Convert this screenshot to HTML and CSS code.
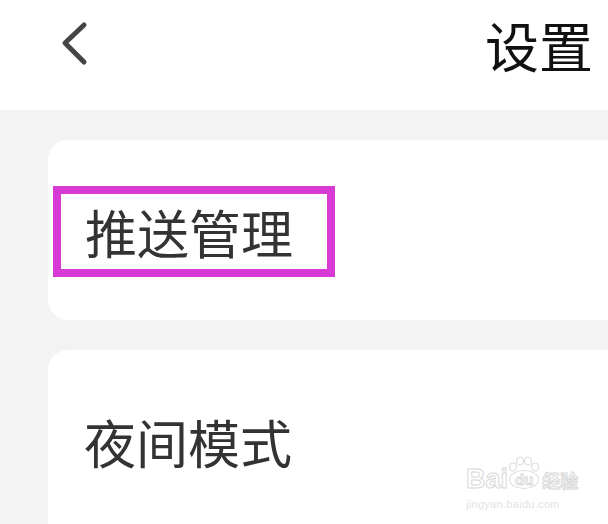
FILE: index.html
```html
<!DOCTYPE html>
<html lang="zh-CN">
<head>
  <meta charset="UTF-8" />
  <meta name="viewport" content="width=device-width, initial-scale=1.0"/>
  <title>设置</title>
  <link rel="stylesheet" href="styles.css">
</head>
<body>
  <div class="header">
    <svg class="back" width="40" height="50" viewBox="0 0 40 50">
      <polyline points="26,6 7,24 26,43" fill="none" stroke="#444" stroke-width="5" stroke-linecap="round" stroke-linejoin="round"/>
    </svg>
    <div class="title">设置</div>
  </div>

  <div class="card card-push">
    <div class="highlight">推送管理</div>
  </div>

  <div class="card card-night">
    <div class="item">夜间模式</div>
    <div class="watermark">
      <div class="wm-logo">
        <span>Bai</span>
        <span class="wm-du">
          <svg class="wm-paw" width="34" height="16" viewBox="0 0 34 16">
            <ellipse cx="6" cy="11" rx="3.5" ry="4" fill="none" stroke="#ddd" stroke-width="1.2"/>
            <ellipse cx="13" cy="5" rx="3.5" ry="4" fill="none" stroke="#ddd" stroke-width="1.2"/>
            <ellipse cx="21" cy="5" rx="3.5" ry="4" fill="none" stroke="#ddd" stroke-width="1.2"/>
            <ellipse cx="28" cy="11" rx="3.5" ry="4" fill="none" stroke="#ddd" stroke-width="1.2"/>
          </svg>
          du
        </span>
        <span class="wm-cn">经验</span>
      </div>
      <div class="wm-url">jingyan.baidu.com</div>
    </div>
  </div>
</body>
</html>
```

FILE: styles.css
```css
body {
  margin: 0;
  background-color: #f3f3f3;
  font-family: "Noto Sans CJK SC", "Noto Sans", sans-serif;
  overflow: hidden;
  height: 524px;
}

.header {
  height: 110px;
  background: #fff;
  display: flex;
  align-items: center;
  justify-content: space-between;
  padding: 0 15px 0 58px;
  box-sizing: border-box;
}

.back {
  margin-top: -22px;
}

.title {
  font-size: 54px;
  line-height: 1;
  color: #111;
  margin-top: -20px;
}

/* cards run off the right edge, so only the left corners are rounded */
.card {
  background: #fff;
  border-radius: 20px 0 0 20px;
  margin: 30px 0 0 48px;
  box-sizing: border-box;
}

.card-push {
  height: 180px;
  padding: 46px 0 0 5px;
}

.highlight {
  width: 282px;
  height: 91px;
  box-sizing: border-box;
  border: 8px solid #d83ad6;
  display: flex;
  align-items: center;
  padding-left: 24px;
  font-size: 52px;
  color: #333;
  line-height: 1;
}

.card-night {
  height: 174px;
  padding: 66px 0 0 36px;
  position: relative;
  border-bottom-left-radius: 0;
}

.item {
  font-size: 52px;
  line-height: 1;
  color: #333;
}

.watermark {
  position: absolute;
  left: 418px;
  top: 116px;
  font-family: "Liberation Sans", sans-serif;
}

.wm-logo {
  display: flex;
  align-items: center;
  gap: 1px;
  font-size: 27px;
  font-weight: bold;
  line-height: 1;
  color: #fff;
  -webkit-text-stroke: 1px #d8d8d8;
}

.wm-du {
  position: relative;
  font-size: 15px;
  border: 1.5px solid #ddd;
  border-radius: 50%;
  padding: 1px 5px;
}

.wm-paw {
  position: absolute;
  left: -3px;
  top: -15px;
}

.wm-cn {
  font-family: "Noto Sans CJK SC", sans-serif;
  font-size: 18px;
  margin-left: 2px;
}

.wm-url {
  font-size: 11px;
  margin-top: 5px;
  color: #e2e2e2;
  letter-spacing: 0.3px;
}
```
